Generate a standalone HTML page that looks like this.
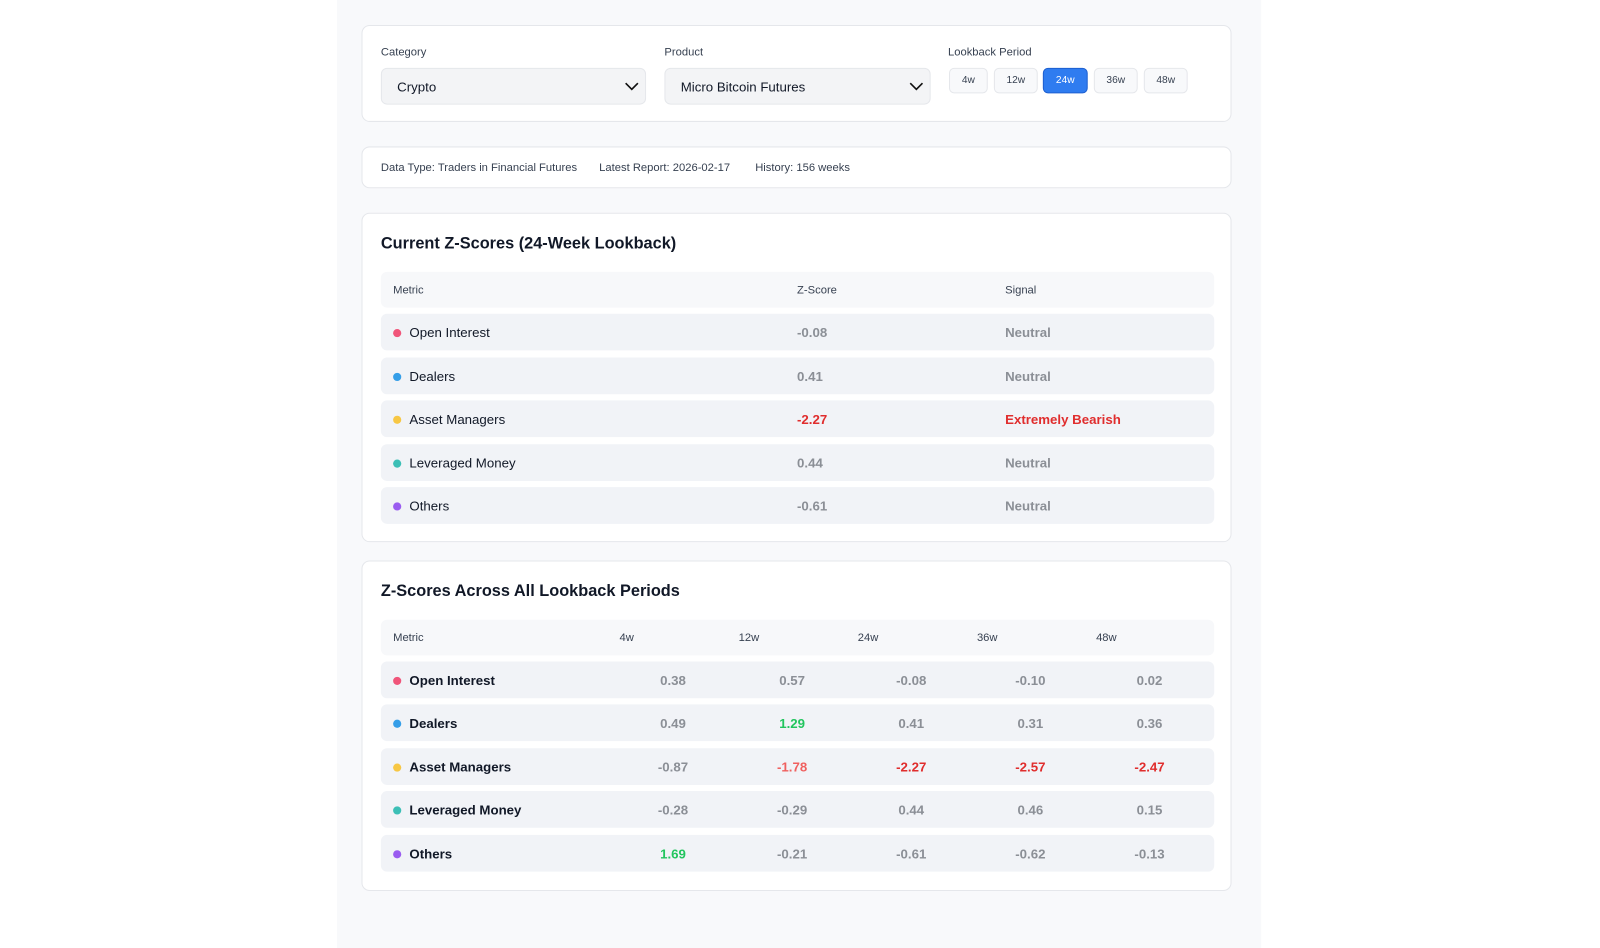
<!DOCTYPE html>
<html><head><meta charset="utf-8"><style>
*{box-sizing:border-box;margin:0;padding:0}
body{width:1600px;height:900px;background:#fff;font-family:"Liberation Sans",sans-serif;color:#111827;overflow:hidden;position:relative}
#w{position:absolute;left:0;top:0;width:1600px;height:900px;transform:scale(1.02);transform-origin:31px 23px}
.col{position:absolute;left:331px;top:-30px;width:906px;height:960px;background:#f8f9fb}
.card{position:absolute;left:355px;width:853px;background:#fff;border:1px solid #e5e7eb;border-radius:8px}
.lbl{position:absolute;font-size:11px;color:#374151}
.sel{position:absolute;top:41px;height:36px;background:#f3f4f6;border:1px solid #e5e7eb;border-radius:6px;font-size:13px;padding:10px 15px;color:#111827}
.sel svg{position:absolute;right:5px;top:11px}
.btn{position:absolute;top:41px;height:25px;border:1px solid #e5e7eb;background:#f8f9fb;border-radius:5px;font-size:10px;color:#374151;text-align:center;line-height:23px}
.btn.on{background:#2f7cf0;border-color:#1d5fd0;color:#fff}
.info{font-size:11px;color:#374151;position:absolute;top:14px}
h2{position:absolute;left:18px;font-size:16px;font-weight:bold;color:#111827}
.row{position:absolute;left:18px;width:817px;height:36px;border-radius:6px;background:#f1f3f7;display:grid;align-items:center;font-size:13px}
.hd{background:#f7f8fa;font-size:11px;color:#374151;height:35px}
.t1{grid-template-columns:396px 204px 1fr}
.t1>div{padding-left:12px}
.t2{grid-template-columns:228px repeat(5,116.8px)}
.t2>div:first-child{padding-left:12px}
.t2.hd>div{padding-left:6px}
.t2.hd>div:first-child{padding-left:12px}
.t2:not(.hd)>div:not(:first-child){text-align:center}
.n{color:#111827}
.t2 .n{font-weight:bold}
.n i{display:inline-block;width:8px;height:8px;border-radius:50%;margin-right:8px;vertical-align:0}
.g{color:#8b8f96;font-weight:bold}
.r{color:#e02d2d;font-weight:bold}
.gr{color:#22c55e;font-weight:bold}
</style></head><body>
<div id="w">
<div class="col"></div>
<div class="card" style="top:25px;height:95px">
 <div class="lbl" style="left:18px;top:20px">Category</div>
 <div class="sel" style="left:18px;width:260px">Crypto<svg width="16" height="12" viewBox="0 0 16 12"><path d="M2 3l6 6 6-6" fill="none" stroke="#111" stroke-width="1.6"/></svg></div>
 <div class="lbl" style="left:296px;top:20px">Product</div>
 <div class="sel" style="left:296px;width:261px">Micro Bitcoin Futures<svg width="16" height="12" viewBox="0 0 16 12"><path d="M2 3l6 6 6-6" fill="none" stroke="#111" stroke-width="1.6"/></svg></div>
 <div class="lbl" style="left:574px;top:20px">Lookback Period</div>
 <div class="btn" style="left:575px;width:38px">4w</div>
 <div class="btn" style="left:619px;width:43px">12w</div>
 <div class="btn on" style="left:667px;width:44px">24w</div>
 <div class="btn" style="left:717px;width:43px">36w</div>
 <div class="btn" style="left:766px;width:43px">48w</div>
</div>
<div class="card" style="top:144px;height:41px">
 <div class="info" style="left:18px">Data Type: Traders in Financial Futures</div>
 <div class="info" style="left:232px">Latest Report: 2026-02-17</div>
 <div class="info" style="left:385px">History: 156 weeks</div>
</div>
<div class="card" style="top:209px;height:323px">
 <h2 style="top:21px">Current Z-Scores (24-Week Lookback)</h2>
 <div class="row hd t1" style="top:57px"><div>Metric</div><div>Z-Score</div><div>Signal</div></div>
 <div class="row t1" style="top:98px"><div class="n"><i style="background:#f0557a"></i>Open Interest</div><div class="g">-0.08</div><div class="g">Neutral</div></div>
 <div class="row t1" style="top:141px"><div class="n"><i style="background:#359ee8"></i>Dealers</div><div class="g">0.41</div><div class="g">Neutral</div></div>
 <div class="row t1" style="top:183px"><div class="n"><i style="background:#f7c744"></i>Asset Managers</div><div class="r">-2.27</div><div class="r">Extremely Bearish</div></div>
 <div class="row t1" style="top:226px"><div class="n"><i style="background:#3cbfb6"></i>Leveraged Money</div><div class="g">0.44</div><div class="g">Neutral</div></div>
 <div class="row t1" style="top:268px"><div class="n"><i style="background:#9a5cf0"></i>Others</div><div class="g">-0.61</div><div class="g">Neutral</div></div>
</div>
<div class="card" style="top:550px;height:324px">
 <h2 style="top:21px">Z-Scores Across All Lookback Periods</h2>
 <div class="row hd t2" style="top:57px"><div>Metric</div><div>4w</div><div>12w</div><div>24w</div><div>36w</div><div>48w</div></div>
 <div class="row t2" style="top:98px"><div class="n"><i style="background:#f0557a"></i>Open Interest</div><div class="g">0.38</div><div class="g">0.57</div><div class="g">-0.08</div><div class="g">-0.10</div><div class="g">0.02</div></div>
 <div class="row t2" style="top:140px"><div class="n"><i style="background:#359ee8"></i>Dealers</div><div class="g">0.49</div><div class="gr">1.29</div><div class="g">0.41</div><div class="g">0.31</div><div class="g">0.36</div></div>
 <div class="row t2" style="top:183px"><div class="n"><i style="background:#f7c744"></i>Asset Managers</div><div class="g">-0.87</div><div style="color:#f0605f;font-weight:bold">-1.78</div><div class="r">-2.27</div><div class="r">-2.57</div><div class="r">-2.47</div></div>
 <div class="row t2" style="top:225px"><div class="n"><i style="background:#3cbfb6"></i>Leveraged Money</div><div class="g">-0.28</div><div class="g">-0.29</div><div class="g">0.44</div><div class="g">0.46</div><div class="g">0.15</div></div>
 <div class="row t2" style="top:268px"><div class="n"><i style="background:#9a5cf0"></i>Others</div><div class="gr">1.69</div><div class="g">-0.21</div><div class="g">-0.61</div><div class="g">-0.62</div><div class="g">-0.13</div></div>
</div>
</div>
</body></html>
